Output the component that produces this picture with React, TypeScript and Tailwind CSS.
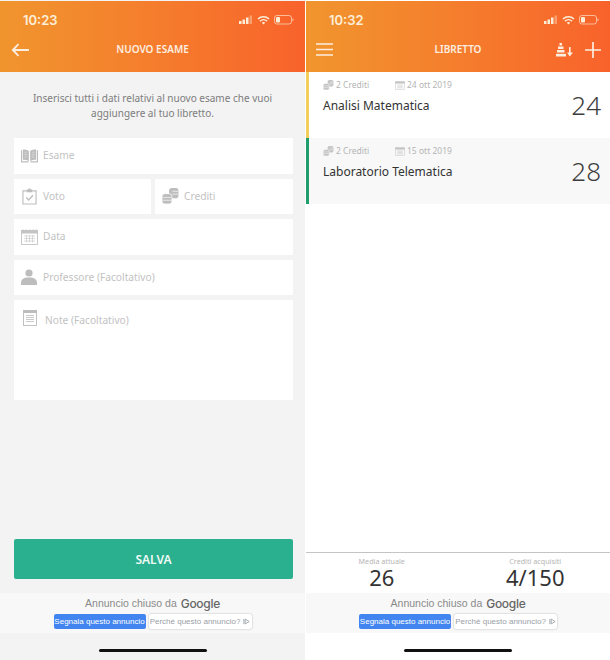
import React from 'react';

const FONT = "font-['Noto_Sans','Open_Sans',sans-serif]";

function StatusBar({ time }: { time: string }) {
  return (
    <div className="flex h-[37px] items-start justify-between pl-[23px] pr-[10px] pt-[10px]">
      <span className="font-['Inter',sans-serif] text-[13px] leading-[18px] font-semibold text-[#fdeed8]">{time}</span>
      <svg width="56" height="14" viewBox="0 0 56 14" className="mt-[2px] text-[#fdeed8]">
        <rect x="0" y="8" width="2.5" height="3" fill="currentColor" />
        <rect x="3.5" y="6.5" width="2.5" height="4.5" fill="currentColor" />
        <rect x="7" y="4.5" width="2.5" height="6.5" fill="currentColor" />
        <rect x="10.5" y="2.5" width="2.5" height="8.5" fill="currentColor" opacity="0.4" />
        <path d="M19 6a8 8 0 0 1 11 0M21 8.2a5 5 0 0 1 7 0" fill="none" stroke="currentColor" strokeWidth="1.6" />
        <path d="M22.8 9.8a2.4 2.4 0 0 1 3.4 0L24.5 11.6z" fill="currentColor" />
        <rect x="35.5" y="2.5" width="17" height="8.5" rx="2.4" fill="none" stroke="currentColor" strokeWidth="0.9" opacity="0.7" />
        <rect x="37" y="4" width="4" height="5.5" rx="1" fill="currentColor" />
        <rect x="53.3" y="5.5" width="1.2" height="2.6" rx="0.6" fill="currentColor" opacity="0.6" />
      </svg>
    </div>
  );
}

function Header({ time, title, left, right }: { time: string; title: string; left: React.ReactNode; right?: React.ReactNode }) {
  return (
    <div className="mt-px h-[71px] shrink-0 bg-gradient-to-r from-[#f0952e] to-[#f8622b]">
      <StatusBar time={time} />
      <div className="relative flex h-[23px] items-center justify-between pl-[10px] pr-[9px]">
        {left}
        <span className="absolute inset-x-0 text-center text-[10px] font-semibold text-[#fdeee0]">{title}</span>
        {right}
      </div>
    </div>
  );
}

function AdBlock() {
  return (
    <div className="flex h-[40px] shrink-0 flex-col items-center bg-[#f8f8f8] font-['Liberation_Sans',sans-serif]">
      <div className="mt-[2px] flex h-[18px] items-center gap-[4px] text-[10.5px] text-[#8a8a8a]">
        Annuncio chiuso da
        <span className="font-['Inter',sans-serif] text-[12px] font-medium tracking-[-0.3px] text-[#666]">Google</span>
      </div>
      <div className="mt-px flex items-center gap-[3px]">
        <span className="flex h-[15px] w-[92px] items-center justify-center rounded-[2px] bg-[#4285f0] text-[8px] whitespace-nowrap text-white">
          Segnala questo annuncio
        </span>
        <span className="flex h-[15px] w-[103px] items-center justify-center gap-[3px] rounded-[2px] bg-white text-[8px] whitespace-nowrap text-[#9aa0a6] shadow-[0_0_2px_rgba(0,0,0,0.3)]">
          Perché questo annuncio?
          <svg width="7" height="7" viewBox="0 0 8 8" fill="none" stroke="#9aa0a6" strokeWidth="1">
            <path d="M1 1v6M2.5 1.2 7 4 2.5 6.8z" />
          </svg>
        </span>
      </div>
    </div>
  );
}

function HomeBar() {
  return (
    <div className="flex h-[27px] shrink-0 items-center justify-center pt-[8px]">
      <div className="h-[3px] w-[108px] rounded-full bg-[#111]" />
    </div>
  );
}

function BookIcon() {
  return (
    <svg width="17" height="14" viewBox="0 0 18 14" fill="#bdbdbd">
      <path d="M0 1h1.2v11.6H8V14H0zM18 1h-1.2v11.6H10V14h8z" />
      <path d="M2 0c2.4 0 4.6.3 6.3 1.6v10.8C6.6 11.4 4.400 11 2 11z" />
      <path d="M16 0c-2.4 0-4.6.3-6.3 1.6v10.8c1.7-1 3.9-1.4 6.3-1.4z" />
      <path d="M3.5 3h3M3.5 5.5h3M3.5 8h3M11.5 3h3M11.5 5.5h3M11.5 8h3" stroke="#e4e4e4" strokeWidth="0.7" />
    </svg>
  );
}

function ClipboardIcon() {
  return (
    <svg width="15" height="17" viewBox="0 0 16 17" fill="none" stroke="#bdbdbd" strokeWidth="1.2">
      <path d="M5 2.5H1v14h14v-14h-4" />
      <rect x="5" y="1" width="6" height="3" fill="#bdbdbd" stroke="none" />
      <rect x="6.8" y="0" width="2.4" height="2" fill="#bdbdbd" stroke="none" />
      <path d="m4.5 9.5 2.6 2.6 4.6-5" strokeWidth="1.5" />
    </svg>
  );
}

function CoinsIcon({ w = 17, h = 16, color = '#bdbdbd' }: { w?: number; h?: number; color?: string }) {
  return (
    <svg width={w} height={h} viewBox="0 0 18 17" fill={color}>
      <rect x="7.5" y="0" width="10" height="11" rx="3" />
      <rect x="0" y="6" width="10.5" height="11" rx="3" stroke="#fff" strokeWidth="0.8" />
      <path d="M11 3.500h6.500M11 6.500h6.500M0.500 10h9.500M0.500 13h9.500" stroke="#fff" strokeWidth="0.7" />
    </svg>
  );
}

function CalendarIcon({ w = 17, h = 16, color = '#c4c4c4' }: { w?: number; h?: number; color?: string }) {
  return (
    <svg width={w} height={h} viewBox="0 0 17 16" fill="none" stroke={color} strokeWidth="0.9">
      <rect x="0.5" y="1.5" width="16" height="14" />
      <rect x="0" y="1" width="17" height="3.5" fill={color} stroke="none" />
      <path d="M2 0.3v2M5 0.3v2M8.5 0.3v2M12 0.3v2M15 0.3v2" strokeWidth="0.8" />
      <path d="M3 7h11M3 9.5h11M3 12h11M5.5 6v7.5M8.5 6v7.5M11.500 6v7.5" strokeWidth="0.6" />
    </svg>
  );
}

function PersonIcon() {
  return (
    <svg width="16" height="16" viewBox="0 0 16 16" fill="#bdbdbd">
      <circle cx="8" cy="4" r="3.6" />
      <path d="M0 16v-2.500C0 10.500 3 9 5.500 8.500h5C13 9 16 10.500 16 13.500V16z" />
    </svg>
  );
}

function NotesIcon() {
  return (
    <svg width="14" height="16" viewBox="0 0 14 16" fill="none" stroke="#bdbdbd" strokeWidth="0.9">
      <rect x="0.500" y="0.500" width="13" height="15" />
      <rect x="0" y="0" width="14" height="3" fill="#bdbdbd" stroke="none" />
      <path d="M3 5.500h8M3 7.500h8M3 9.500h8M3 11.500h8" strokeWidth="0.8" />
    </svg>
  );
}

function Field({ icon, label, className = '' }: { icon: React.ReactNode; label: string; className?: string }) {
  return (
    <div className={`flex h-[35.5px] items-center bg-white ${className}`}>
      <div className="flex w-[29px] shrink-0 justify-center pl-[1px]">{icon}</div>
      <span className="text-[10.2px] text-[#c2c2c2]">{label}</span>
    </div>
  );
}

function NuovoEsame() {
  return (
    <div className="flex h-[660px] w-[305px] flex-col bg-[#f3f3f3]">
      <Header
        time="10:23"
        title="NUOVO ESAME"
        left={
          <svg width="18" height="14" viewBox="0 0 18 14" fill="none" stroke="#fdeee0" strokeWidth="1.8" className="ml-px">
            <path d="M18 7H2M7.500 1.200 1.800 7l5.700 5.800" />
          </svg>
        }
      />
      <p className="mt-[19px] h-[47px] px-[20px] text-center text-[10px] leading-[15px] text-[#7d7d7d]">
        Inserisci tutti i dati relativi al nuovo esame che vuoi
        <br />
        aggiungere al tuo libretto.
      </p>
      <div className="flex flex-col gap-[5px] pl-[14px] pr-[12px]">
        <Field icon={<BookIcon />} label="Esame" />
        <div className="flex gap-[4px]">
          <Field icon={<ClipboardIcon />} label="Voto" className="w-[137px]" />
          <Field icon={<CoinsIcon />} label="Crediti" className="flex-1" />
        </div>
        <Field icon={<CalendarIcon />} label="Data" />
        <Field icon={<PersonIcon />} label="Professore (Facoltativo)" />
        <div className="flex h-[100px] bg-white pt-[10px]">
          <div className="flex w-[31px] shrink-0 justify-center">
            <NotesIcon />
          </div>
          <span className="mt-[3px] text-[10.2px] leading-[15px] text-[#c2c2c2]">Note (Facoltativo)</span>
        </div>
      </div>
      <div className="flex-1" />
      <div className="mb-[14px] ml-[14px] mr-[12px] flex h-[40px] items-center justify-center rounded-[2px] bg-[#2bb08f] pt-[2px] text-[12px] font-semibold text-[#eefaf6]">
        SALVA
      </div>
      <AdBlock />
      <HomeBar />
    </div>
  );
}

function EsameRow({ crediti, date, name, voto, border, bg }: { crediti: string; date: string; name: string; voto: string; border: string; bg: string }) {
  return (
    <div className={`flex h-[66px] items-start justify-between border-l-[3px] pl-[14px] pr-[9px] ${border} ${bg}`}>
      <div>
        <div className="mt-[6px] flex h-[14px] items-center text-[8.500px] text-[#b5b5b5]">
          <span className="flex w-[72px] items-center gap-[2px]">
            <CoinsIcon w={11} h={10} color="#c4c4c4" />
            {crediti}
          </span>
          <span className="flex items-center gap-[2px]">
            <CalendarIcon w={10} h={9} />
            {date}
          </span>
        </div>
        <div className="mt-[5px] text-[12px] leading-[18px] text-[#333]">{name}</div>
      </div>
      <span className="mt-[16px] text-[26px] leading-[34px] font-light text-[#3d3d3d]">{voto}</span>
    </div>
  );
}

function Libretto() {
  return (
    <div className="flex h-[660px] w-[304px] flex-col bg-white">
      <Header
        time="10:32"
        title="LIBRETTO"
        left={
          <svg width="17" height="13" viewBox="0 0 17 13" stroke="#fdeee0" strokeWidth="1.600">
            <path d="M0 1h17M0 6.500h17M0 12h17" />
          </svg>
        }
        right={
          <div className="relative flex items-center gap-[12px]">
            <svg width="17" height="14" viewBox="0 0 17 14" fill="#fdeee0">
              <rect x="3.500" y="0" width="2.500" height="2.500" />
              <rect x="2" y="3.500" width="5.500" height="2.500" />
              <rect x="1" y="7" width="7.500" height="2.500" />
              <rect x="0" y="10.800" width="10" height="2.700" />
              <path d="M13 4h1.600v5.500H17L13.800 13.500 11 9.500h2z" />
            </svg>
            <svg width="16" height="16" viewBox="0 0 17 17" stroke="#fdeee0" strokeWidth="1.800">
              <path d="M0 8.500h17M8.500 0v17" />
            </svg>
          </div>
        }
      />
      <EsameRow crediti="2 Crediti" date="24 ott 2019" name="Analisi Matematica" voto="24" border="border-[#f2cf5a]" bg="bg-white" />
      <EsameRow crediti="2 Crediti" date="15 ott 2019" name="Laboratorio Telematica" voto="28" border="border-[#1f9d6d]" bg="bg-[#f8f8f8]" />
      <div className="flex-1" />
      <div className="grid h-[41px] shrink-0 grid-cols-2 border-t border-[#c4c4c4] pl-[1px]">
        <div className="flex flex-col items-center pr-[2px]">
          <span className="mt-[3px] text-[7.2px] leading-[10px] text-[#b5b5b5]">Media attuale</span>
          <span className="text-[22px] leading-[23px] text-[#333]">26</span>
        </div>
        <div className="flex flex-col items-center pl-[2px]">
          <span className="mt-[3px] text-[7.2px] leading-[10px] text-[#b5b5b5]">Crediti acquisiti</span>
          <span className="text-[22px] leading-[23px] text-[#333]">4/150</span>
        </div>
      </div>
      <AdBlock />
      <HomeBar />
    </div>
  );
}

export default function App() {
  return (
    <div className={`flex h-[660px] w-[610px] gap-px overflow-hidden bg-white ${FONT}`}>
      <NuovoEsame />
      <Libretto />
    </div>
  );
}
